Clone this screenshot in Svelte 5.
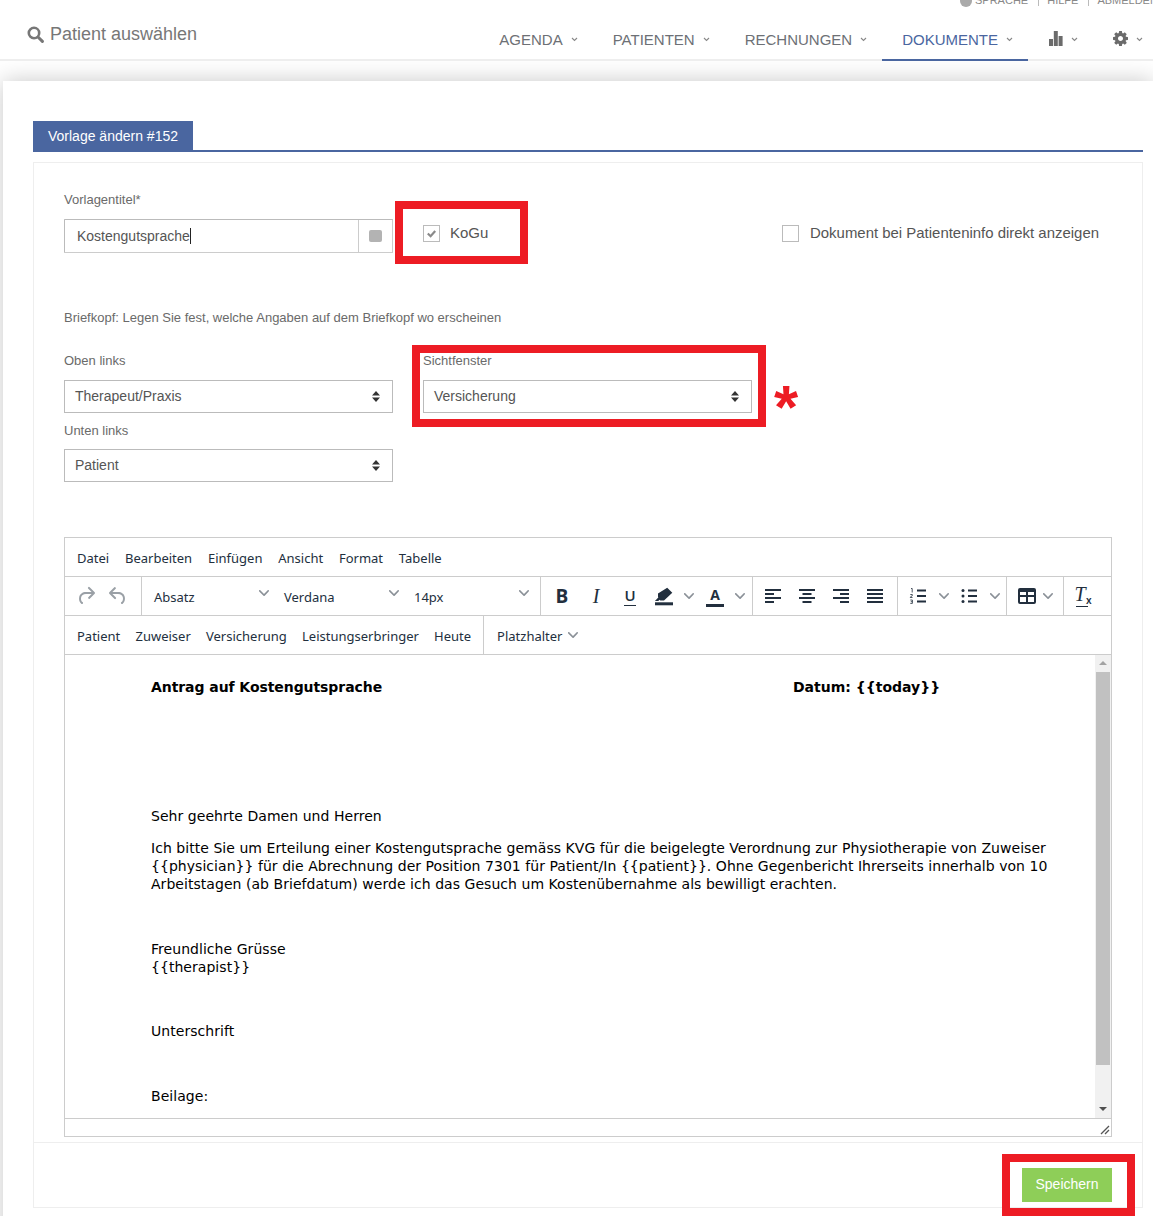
<script>
  const nav = [
    { label: 'AGENDA' },
    { label: 'PATIENTEN' },
    { label: 'RECHNUNGEN' },
    { label: 'DOKUMENTE', active: true }
  ];
  const menus = ['Datei', 'Bearbeiten', 'Einfügen', 'Ansicht', 'Format', 'Tabelle'];
  const selects = ['Absatz', 'Verdana', '14px'];
  const placeholders = ['Patient', 'Zuweiser', 'Versicherung', 'Leistungserbringer', 'Heute'];
</script>

{#snippet chev()}
  <svg class="chev" viewBox="0 0 10 10" width="10" height="10"><path d="M8.7 2.2c.3-.3.8-.3 1 0 .4.4.4.9 0 1.2L5.7 7.8c-.3.3-.9.3-1.2 0L.2 3.4a.8.8 0 0 1 0-1.2c.3-.3.8-.3 1.1 0L5 6l3.7-3.8z"/></svg>
{/snippet}
{#snippet navchev()}
  <svg class="navchev" viewBox="0 0 7 5" width="7" height="5"><path d="M1 1l2.5 2.5L6 1" fill="none" stroke="currentColor" stroke-width="1.1"/></svg>
{/snippet}
{#snippet sort()}
  <svg class="sort" viewBox="0 0 8 11" width="8" height="11"><path d="M4 0l4 4.4H0zM4 11L0 6.6h8z" fill="#333"/></svg>
{/snippet}

<div class="page">
  <header class="top">
    <div class="util">
      <svg viewBox="0 0 12 12" width="12" height="12"><circle cx="6" cy="6" r="6" fill="#aaa"/></svg>
      <span>SPRACHE</span><i></i><span>HILFE</span><i></i><span>ABMELDEN</span>
    </div>
    <div class="search">
      <svg viewBox="0 0 17 17" width="17" height="17"><circle cx="7" cy="7" r="5.2" fill="none" stroke="#777" stroke-width="2.6"/><path d="M11 11l4.4 4.4" stroke="#777" stroke-width="3" stroke-linecap="round"/></svg>
      <span>Patient auswählen</span>
    </div>
    <nav>
      {#each nav as n}
        <div class="item" class:active={n.active}>{n.label}{@render navchev()}</div>
      {/each}
      <div class="item">
        <svg viewBox="0 0 15 15" width="15" height="15"><path d="M1 8h4v7H1zM5.800 0h4v15h-4zM10.600 5h4v10h-4z" fill="#6b6b6b"/></svg>{@render navchev()}
      </div>
      <div class="item">
        <svg viewBox="0 0 1536 1536" width="15" height="15"><path fill="#6b6b6b" d="M1024 768q0-106-75-181t-181-75-181 75-75 181 75 181 181 75 181-75 75-181zm512-109v222q0 12-8 23t-20 13l-185 28q-19 54-39 91 35 50 107 138 10 12 10 25t-9 23q-27 37-99 108t-94 71q-12 0-26-9l-138-108q-44 23-91 38-16 136-29 186-7 28-36 28h-222q-14 0-24.5-8.5t-11.5-21.5l-28-184q-49-16-90-37l-141 107q-10 9-25 9-14 0-25-11-126-114-165-168-7-10-7-23 0-12 8-23 15-21 51-66.5t54-70.5q-27-50-41-99l-183-27q-13-2-21-12.5t-8-23.5v-222q0-12 8-23t19-13l186-28q14-46 39-92-40-57-107-138-10-12-10-24 0-10 9-23 26-36 98.5-107.5t94.5-71.5q13 0 26 10l138 107q44-23 91-38 16-136 29-186 7-28 36-28h222q14 0 24.5 8.5t11.5 21.5l28 184q49 16 90 37l142-107q9-9 24-9 13 0 25 10 129 119 165 170 7 8 7 22 0 12-8 23-15 21-51 66.5t-54 70.5q26 50 41 98l183 28q13 2 21 12.5t8 23.5z"/></svg>{@render navchev()}
      </div>
    </nav>
  </header>

  <main class="card">
    <div class="tabs"><div class="tab">Vorlage ändern #152</div></div>
    <section class="panel">
      <div class="form">
        <div class="row1">
          <div class="field">
            <div class="label">Vorlagentitel*</div>
            <div class="inputgroup">
              <div class="input"><span class="typed">Kostengutsprache</span></div>
              <div class="addon"><b></b></div>
            </div>
          </div>
          <label class="check kogu">
            <span class="box"><svg viewBox="0 0 15 15" width="15" height="15"><path d="M3.800 7.500l2.800 2.700L11.200 5" fill="none" stroke="#8a8a8a" stroke-width="2.200"/></svg></span>KoGu
          </label>
          <label class="check direct"><span class="box"></span>Dokument bei Patienteninfo direkt anzeigen</label>
        </div>

        <p class="hint">Briefkopf: Legen Sie fest, welche Angaben auf dem Briefkopf wo erscheinen</p>

        <div class="grid">
          <div>
            <div class="label">Oben links</div>
            <div class="select"><span>Therapeut/Praxis</span>{@render sort()}</div>
            <div class="label second">Unten links</div>
            <div class="select"><span>Patient</span>{@render sort()}</div>
          </div>
          <div>
            <div class="label">Sichtfenster</div>
            <div class="select"><span>Versicherung</span>{@render sort()}</div>
          </div>
        </div>

        <div class="editor">
          <div class="bar menubar">
            {#each menus as m}<span>{m}</span>{/each}
          </div>
          <div class="bar toolbar">
            <div class="grp hist">
              <span class="btn h"><svg viewBox="0 0 24 24" width="24" height="24"><path d="M17.6 10H12c-2.8 0-4.4 1.4-4.9 3.5-.4 2 .3 4 1.4 4.6a1 1 0 1 1-1 1.8c-2-1.2-2.9-4.1-2.3-6.8.6-3 3.2-5.1 6.8-5.1h5.6l-3.3-3.3a1 1 0 1 1 1.4-1.4l5 5a1 1 0 0 1 0 1.4l-5 5a1 1 0 0 1-1.4-1.4l3.3-3.3z" fill="#9aa0a6"/></svg></span>
              <span class="btn h"><svg viewBox="0 0 24 24" width="24" height="24"><path d="M6.4 8H12c3.7 0 6.2 2 6.8 5.1.6 2.7-.4 5.6-2.3 6.8a1 1 0 0 1-1-1.8c1.1-.6 1.8-2.7 1.4-4.6-.5-2.1-2.1-3.5-4.9-3.5H6.4l3.3 3.3a1 1 0 1 1-1.4 1.4l-5-5a1 1 0 0 1 0-1.4l5-5a1 1 0 0 1 1.4 1.4L6.4 8z" fill="#9aa0a6"/></svg></span>
            </div>
            <div class="grp sels">
              {#each selects as s}
                <div class="sel"><span>{s}</span>{@render chev()}</div>
              {/each}
            </div>
            <div class="grp fmt">
              <span class="btn glyph bold">B</span>
              <span class="btn glyph ital">I</span>
              <span class="btn glyph under">U</span>
              <span class="btn pen"><svg viewBox="0 0 24 24" width="24" height="24"><path d="M15.200 3.700l5.100 5-8.300 7.900H8.300l-.7-.9-1.300 1.300H2.900l3.400-3.500-.3-.7v-3.300z" fill="#222f3e"/><rect x="3" y="18.300" width="18" height="3" fill="#222f3e"/></svg></span>
              <span class="cv">{@render chev()}</span>
              <span class="btn glyph acolor">A</span>
              <span class="cv">{@render chev()}</span>
            </div>
            <div class="grp align">
              <span class="btn"><svg viewBox="0 0 24 24" width="24" height="24"><path d="M4 5h16v2H4zM4 9h9v2H4zM4 13h16v2H4zM4 17h9v2H4z" fill="#222f3e"/></svg></span>
              <span class="btn"><svg viewBox="0 0 24 24" width="24" height="24"><path d="M4 5h16v2H4zM7.500 9h9v2h-9zM4 13h16v2H4zM7.500 17h9v2h-9z" fill="#222f3e"/></svg></span>
              <span class="btn"><svg viewBox="0 0 24 24" width="24" height="24"><path d="M4 5h16v2H4zM11 9h9v2h-9zM4 13h16v2H4zM11 17h9v2h-9z" fill="#222f3e"/></svg></span>
              <span class="btn"><svg viewBox="0 0 24 24" width="24" height="24"><path d="M4 5h16v2H4zM4 9h16v2H4zM4 13h16v2H4zM4 17h16v2H4z" fill="#222f3e"/></svg></span>
            </div>
            <div class="grp lists">
              <span class="btn"><svg viewBox="0 0 24 24" width="24" height="24"><path d="M11 5.500h9v2h-9zM11 11h9v2h-9zM11 16.500h9v2h-9z" fill="#222f3e"/><path d="M5 4.500h1.200v4M4.300 10.500h2v1.200l-2 1.300v.5h2.200M4.300 16h2.100v3.400H4.300M4.800 17.700h1.500" fill="none" stroke="#222f3e" stroke-width=".8"/></svg></span>
              <span class="cv">{@render chev()}</span>
              <span class="btn"><svg viewBox="0 0 24 24" width="24" height="24"><path d="M11 5.500h9v2h-9zM11 11h9v2h-9zM11 16.500h9v2h-9z" fill="#222f3e"/><circle cx="6" cy="6.500" r="1.500" fill="#222f3e"/><circle cx="6" cy="12" r="1.500" fill="#222f3e"/><circle cx="6" cy="17.500" r="1.500" fill="#222f3e"/></svg></span>
              <span class="cv">{@render chev()}</span>
            </div>
            <div class="grp tbl">
              <span class="btn"><svg viewBox="0 0 24 24" width="24" height="24"><path d="M5 4h14a2 2 0 0 1 2 2v12a2 2 0 0 1-2 2H5a2 2 0 0 1-2-2V6a2 2 0 0 1 2-2zm0 7h6V8H5zm8 0h6V8h-6zm-8 7h6v-5H5zm8 0h6v-5h-6z" fill="#222f3e" fill-rule="evenodd"/></svg></span>
              <span class="cv tight">{@render chev()}</span>
            </div>
            <div class="grp clear">
              <span class="btn glyph tx"><em>T</em><small>x</small></span>
            </div>
          </div>
          <div class="bar phbar">
            <div class="phs">{#each placeholders as p}<span>{p}</span>{/each}</div>
            <div class="ph2"><span>Platzhalter</span>{@render chev()}</div>
          </div>
          <div class="content">
            <div class="doc">
              <p class="strong"><span class="ant">Antrag auf Kostengutsprache</span><span>Datum: {'{{today}}'}</span></p>
              <p>&nbsp;</p>
              <p>&nbsp;</p>
              <p>&nbsp;</p>
              <p>Sehr geehrte Damen und Herren</p>
              <p>Ich bitte Sie um Erteilung einer Kostengutsprache gemäss KVG für die beigelegte Verordnung zur Physiotherapie von Zuweiser {'{{physician}}'} für die Abrechnung der Position 7301 für Patient/In {'{{patient}}'}. Ohne Gegenbericht Ihrerseits innerhalb von 10 Arbeitstagen (ab Briefdatum) werde ich das Gesuch um Kostenübernahme als bewilligt erachten.</p>
              <p>&nbsp;</p>
              <p>Freundliche Grüsse<br />{'{{therapist}}'}</p>
              <p>&nbsp;</p>
              <p>Unterschrift</p>
              <p>&nbsp;</p>
              <p>Beilage:</p>
            </div>
            <div class="scroll">
              <span class="up"></span>
              <span class="thumb"></span>
              <span class="down"></span>
            </div>
          </div>
          <div class="status">
            <svg viewBox="0 0 10 10" width="10" height="10"><path d="M9 1L1 9M9 5L5 9" stroke="#555" stroke-width="1.300" fill="none"/></svg>
          </div>
        </div>
      </div>
      <footer class="foot"><button>Speichern</button></footer>
    </section>
  </main>

  <div class="mark m1"></div>
  <div class="mark m2"></div>
  <div class="mark m3"></div>
  <div class="star">*</div>
</div>

<style>
  :global(body) { margin: 0; background: #fff; }
  .page {
    position: relative;
    width: 1153px;
    height: 1216px;
    overflow: hidden;
    font-family: "Liberation Sans", Arial, sans-serif;
    color: #555;
    background: #fff;
  }
  .top {
    position: relative;
    z-index: 1;
    box-sizing: border-box;
    height: 61px;
    background: #fff;
    border-bottom: 2px solid #eee;
    display: flex;
    padding-left: 27px;
  }
  .util {
    position: absolute;
    top: -6px;
    left: 960px;
    display: flex;
    align-items: center;
    gap: 8px;
    font-size: 11px;
    line-height: 13px;
    color: #888;
    white-space: nowrap;
  }
  .util svg { margin-right: -5px; }
  .util i { width: 1px; height: 11px; background: #bbb; margin: 0 .5px; }
  .util span { margin-right: 1px; }
  .search {
    display: flex;
    align-items: center;
    gap: 6px;
    height: 20px;
    margin-top: 24px;
    font-size: 18px;
    color: #777;
  }
  nav {
    margin-left: auto;
    margin-right: -5px;
    display: flex;
    height: 61px;
  }
  .item {
    box-sizing: border-box;
    height: 61px;
    padding: 31px 15px 0 20px;
    font-size: 15px;
    line-height: 18px;
    color: #6d7075;
    border-bottom: 2px solid transparent;
    display: flex;
    align-items: flex-start;
    gap: 8px;
    white-space: nowrap;
  }
  .item svg:first-child { margin-top: 0; }
  .item.active { color: #4a66a0; border-bottom-color: #4a66a0; }
  .navchev { margin-top: 6px !important; color: #888; flex: none; }
  .card {
    position: relative;
    box-sizing: border-box;
    margin: 20px 0 0 3px;
    height: 1200px;
    padding: 40px 10px 0 30px;
    background: #fff;
    box-shadow: 0 0 22px rgba(0, 0, 0, .22);
  }
  .tabs { border-bottom: 2px solid #4a66a0; height: 29px; }
  .tab {
    width: 160px;
    height: 31px;
    box-sizing: border-box;
    background: #4a66a0;
    color: #fff;
    font-size: 14px;
    line-height: 30px;
    text-align: center;
  }
  .panel { margin-top: 10px; border: 1px solid #eee; width: 1110px; box-sizing: border-box; }
  .form { padding: 30px 30px 5px 30px; }
  .label { font-size: 13px; line-height: 14px; color: #6a6a6a; margin-bottom: 12px; }
  .row1 { display: flex; align-items: flex-end; }
  .row1 .label { margin-bottom: 12px; }
  .field { width: 329px; }
  .inputgroup { display: flex; height: 34px; box-sizing: border-box; border: 1px solid #ccc; border-top-color: #bbb; }
  .input { flex: 1; padding-left: 12px; font-size: 14px; line-height: 32px; color: #555; border-left: 1px solid #bbb; margin-left: -1px; }
  .typed { border-right: 1px solid #222; }
  .addon { width: 33px; border-left: 1px solid #ccc; display: flex; align-items: center; justify-content: center; }
  .addon b { width: 13px; height: 12px; border-radius: 2px; background: #b3b3b3; }
  .check { display: flex; align-items: center; font-size: 15px; line-height: 18px; color: #555; margin-bottom: 11px; }
  .box { box-sizing: border-box; width: 17px; height: 17px; border: 1px solid #bbb; display: block; margin-right: 10px; flex: none; }
  .box svg { display: block; }
  .kogu { margin-left: 30px; }
  .direct { margin-left: auto; margin-right: 13px; font-size: 14.950px; }
  .direct .box { margin-right: 11px; }
  .hint { margin: 58px 0 29px; font-size: 13px; line-height: 14px; color: #6a6a6a; }
  .grid { display: grid; grid-template-columns: 329px 329px; column-gap: 30px; }
  .select {
    box-sizing: border-box;
    height: 33px;
    border: 1px solid #bbb;
    padding: 0 12px 2px 10px;
    display: flex;
    align-items: center;
    justify-content: space-between;
    font-size: 14px;
    color: #555;
  }
  .select .sort { margin-top: 2px; }
  .second { margin-top: 11px; margin-bottom: 11px; }
  .editor {
    margin-top: 55px;
    box-sizing: border-box;
    height: 600px;
    width: 1048px;
    border: 1px solid #ccc;
    display: flex;
    flex-direction: column;
    font-family: "Noto Sans", "Open Sans", sans-serif;
    color: #222f3e;
  }
  .bar { box-sizing: border-box; height: 39px; border-bottom: 1px solid #ccc; display: flex; align-items: center; font-size: 13px; flex: none; }
  .menubar { padding: 2px 0 0 12px; gap: 15.800px; }
  .toolbar { align-items: stretch; }
  .grp { display: flex; align-items: center; box-sizing: border-box; border-right: 1px solid #ccc; flex: none; }
  .hist { width: 77px; padding-left: 5px; }
  .btn { width: 34px; height: 34px; display: flex; align-items: center; justify-content: center; flex: none; }
  .btn.h { width: 32px; }
  .btn svg { display: block; }
  .chev { fill: #8b9198; display: block; flex: none; }
  .sels { width: 399px; }
  .sel { width: 130px; box-sizing: border-box; padding: 2px 0 0 12px; display: flex; align-items: center; position: relative; }
  .sel .chev { position: absolute; left: 117px; top: 2px; }
  .fmt { width: 212px; padding-left: 4px; }
  .fmt .cv { margin-left: -1px; margin-right: 1px; }
  .glyph { font-family: "Open Sans", sans-serif; color: #222f3e; font-size: 17px; }
  .bold { font-weight: 700; font-size: 19px; }
  .ital { font-family: "Liberation Serif", serif; font-style: italic; font-size: 20px; }
  .under { position: relative; font-size: 15px; font-weight: 600; padding-bottom: 3px; box-sizing: border-box; }
  .under::after { content: ""; position: absolute; left: 11px; right: 11px; bottom: 7px; height: 1.500px; background: #222f3e; }
  .acolor { font-size: 14px; font-weight: 700; position: relative; padding-bottom: 3px; box-sizing: border-box; }
  .acolor::after { content: ""; position: absolute; left: 8px; right: 8px; bottom: 6px; height: 3px; background: #222f3e; }
  .cv { width: 17px; display: flex; justify-content: center; flex: none; }
  .cv.tight { margin-left: -5px; margin-right: 8px; }
  .align { width: 145px; padding-left: 3px; }
  .lists { width: 109px; padding-left: 3px; }
  .tbl { width: 57px; padding-left: 3px; }
  .clear { padding-left: 3px; border-right: 0; }
  .tx { position: relative; font-family: "Liberation Serif", serif; font-size: 20px; }
  .tx em { margin: -3px 8px 0 0; }
  .tx::after { content: ""; position: absolute; left: 9px; width: 12px; bottom: 6px; height: 1.500px; background: #222f3e; }
  .tx small { font-family: "Noto Sans", sans-serif; font-size: 10px; position: absolute; left: 19px; top: 14px; font-weight: 600; }
  .phbar { padding-left: 12px; }
  .phs { display: flex; gap: 15.200px; padding: 0 12px 0 0; border-right: 1px solid #ccc; height: 38px; align-items: center; }
  .phs span { margin-top: 2px; }
  .ph2 { display: flex; align-items: center; gap: 6px; padding: 2px 0 0 13px; }
  .ph2 .chev { margin-top: -3px; }
  .content { flex: 1; min-height: 0; display: flex; overflow: hidden; }
  .doc { flex: 1; padding: 23px 0 0 86px; font-family: "DejaVu Sans", Verdana, sans-serif; font-size: 14px; line-height: 18.200px; color: #000; letter-spacing: .045px; }
  .doc p { margin: 0 0 14px; max-width: 906px; }
  .strong { font-weight: 700; display: flex; letter-spacing: 0; }
  .ant { width: 642px; letter-spacing: -.07px; }
  .scroll { width: 16px; background: #f1f1f1; position: relative; flex: none; }
  .thumb { position: absolute; top: 17px; left: 1px; width: 14px; height: 393px; background: #c1c1c1; }
  .up, .down { position: absolute; left: 4px; width: 0; height: 0; border: 4px solid transparent; }
  .up { top: 2px; border-bottom-color: #a3a3a3; }
  .down { bottom: 3px; border-top-color: #505050; }
  .status { height: 18px; box-sizing: border-box; border-top: 1px solid #ccc; display: flex; justify-content: flex-end; align-items: flex-end; padding: 0 1px 1px 0; flex: none; }
  .foot { border-top: 1px solid #eee; padding: 25px 30px 5px 0; display: flex; justify-content: flex-end; }
  button {
    width: 90px;
    height: 34px;
    border: 0;
    background: #8ece58;
    color: #fff;
    font-family: "Liberation Sans", Arial, sans-serif;
    font-size: 14px;
    padding: 0 0 2px;
  }
  .mark { position: absolute; box-sizing: border-box; border: 8px solid #ed1c24; z-index: 2; }
  .m1 { left: 395px; top: 201px; width: 133px; height: 63px; }
  .m2 { left: 412px; top: 345px; width: 354px; height: 82px; }
  .m3 { left: 1002px; top: 1154px; width: 133px; height: 62px; }
  .star { position: absolute; left: 774px; top: 376px; z-index: 2; font-family: "Liberation Sans", Arial, sans-serif; font-size: 62px; line-height: 62px; font-weight: 700; color: #ed1c24; }
</style>
